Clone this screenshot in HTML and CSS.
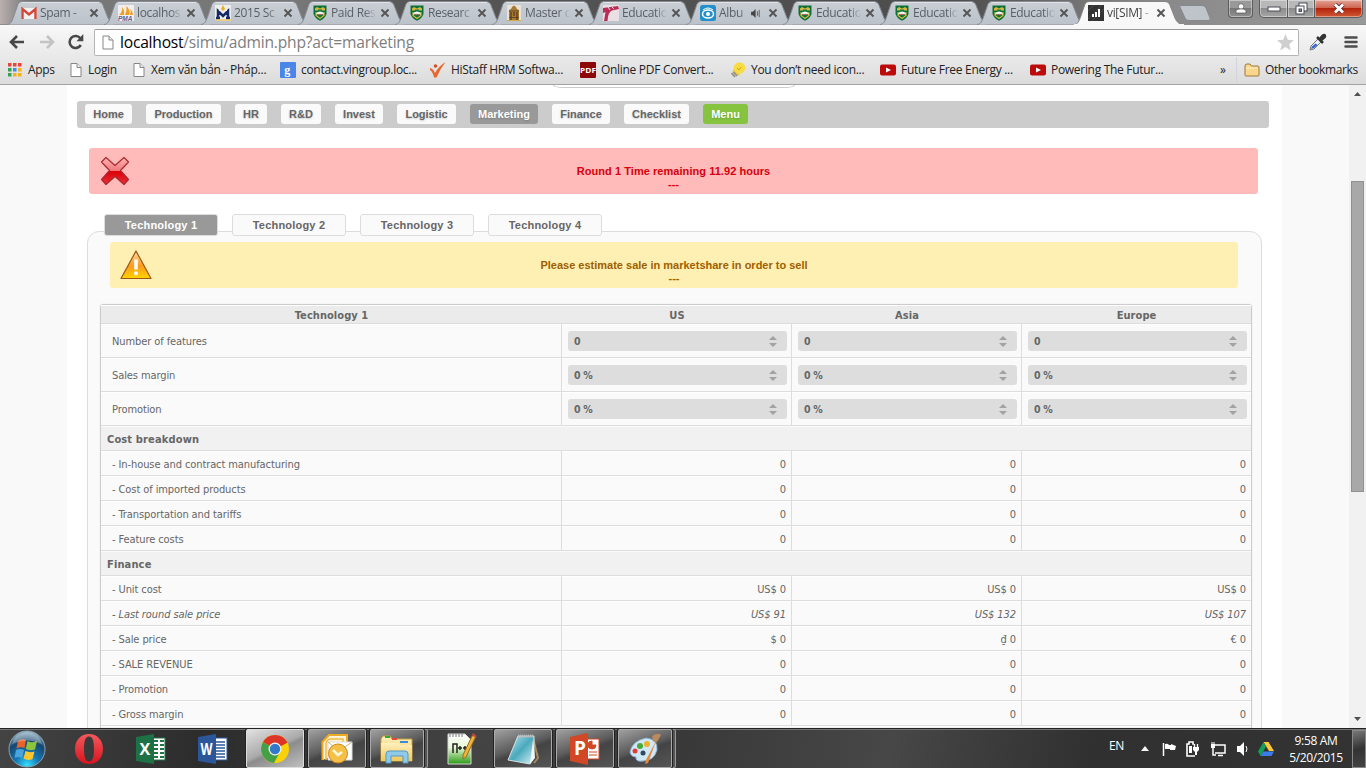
FILE: index.html
```html
<!DOCTYPE html>
<html lang="en">
<head>
<meta charset="utf-8">
<title>vi[SIM] - Marketing</title>
<link rel="stylesheet" href="styles.css">
</head>
<body>
<svg class="defs" width="0" height="0" aria-hidden="true">
  <defs>
    <linearGradient id="tabg" x1="0" y1="0" x2="0" y2="1"><stop offset="0" stop-color="#c9ced5"/><stop offset="1" stop-color="#bcc2ca"/></linearGradient>
    <linearGradient id="redg" x1="0" y1="0" x2="0" y2="1"><stop offset="0" stop-color="#ffb4b4"/><stop offset=".48" stop-color="#f07a7c"/><stop offset=".52" stop-color="#dc0008"/><stop offset="1" stop-color="#e83238"/></linearGradient>
    <linearGradient id="warng" x1="0" y1="0" x2="0" y2="1"><stop offset="0" stop-color="#ffd9a0"/><stop offset=".55" stop-color="#fb9b1c"/><stop offset="1" stop-color="#ffd400"/></linearGradient>
    <radialGradient id="orbg" cx=".5" cy=".95" r=".95"><stop offset="0" stop-color="#37e0ff"/><stop offset=".35" stop-color="#1577b5"/><stop offset=".7" stop-color="#17476f"/><stop offset="1" stop-color="#9cb9c9"/></radialGradient>
    <linearGradient id="operag" x1="0" y1="0" x2="0" y2="1"><stop offset="0" stop-color="#f2595c"/><stop offset="1" stop-color="#d9131f"/></linearGradient>
    <linearGradient id="folderg" x1="0" y1="0" x2="0" y2="1"><stop offset="0" stop-color="#fff0bd"/><stop offset="1" stop-color="#edc95c"/></linearGradient>
    <linearGradient id="padg" x1="0" y1="0" x2="1" y2="1"><stop offset="0" stop-color="#b8e8ef"/><stop offset=".5" stop-color="#4aa9bd"/><stop offset="1" stop-color="#d9f3f6"/></linearGradient>
    <linearGradient id="nppg" x1="0" y1="0" x2="0" y2="1"><stop offset="0" stop-color="#fff"/><stop offset=".45" stop-color="#e7f7d6"/><stop offset="1" stop-color="#2a9a14"/></linearGradient>
    <symbol id="tab" viewBox="0 0 112 25"><path d="M0 24.5C4 24 5 21 6.5 17L11 4Q12 1.500 15 1.500H91Q94 1.500 95.500 4L101 18Q103.500 24 108 24.500" fill="url(#tabg)" stroke="#858a91"/><path d="M14.500 2.500H92" stroke="#dfe3e8"/></symbol>
    <symbol id="tab-on" viewBox="0 0 112 25"><path d="M0 25C4 24 5 21 6.500 17L11 4Q12 1.500 15 1.500H91Q94 1.500 95.500 4L101 18Q103.500 24 109 25" fill="#f8f8f8" stroke="#858585"/><path d="M0 25H110" stroke="#f7f7f7" stroke-width="2"/></symbol>
    <symbol id="x" viewBox="0 0 10 10"><path d="M1.500 1.500L8.500 8.500M8.500 1.500L1.500 8.500" stroke="#555" stroke-width="1.900"/></symbol>
    <symbol id="crest" viewBox="0 0 16 16"><path d="M1.500 .5H14.500V9Q13 13.500 8 15.800Q3 13.500 1.500 9Z" fill="#0b703b"/><path d="M3 3.500L5 2L8 3.500L11 2L13 3.500V5.500H3Z" fill="#d6b83c"/><path d="M6 4.500H10V6H6Z" fill="#177c45"/><path d="M4 8Q8 5 12 8V9.800H4Z" fill="#fff"/><path d="M5 9.500H11" stroke="#9a7552" stroke-width="1.300"/><path d="M4 7V10.500L8 13.500L12 10.500V7" fill="none" stroke="#d9bc3d" stroke-width="1.100"/></symbol>
    <symbol id="page" viewBox="0 0 12 14"><path d="M1 .5H7L11 4.500V13.500H1Z" fill="#fff" stroke="#868686"/><path d="M7 .5V4.500H11" fill="#eee" stroke="#868686"/></symbol>
    <symbol id="yt" viewBox="0 0 16 12"><rect y=".5" width="16" height="11" rx="2" fill="#bd0b0b"/><path d="M6 3.500V8.500L11 6Z" fill="#fff"/></symbol>
  </defs>
</svg>

<header class="chrome">
  <div class="tabs">
    <div class="tab"><svg class="shape"><use href="#tab"/></svg><svg class="fav" viewBox="0 0 16 16"><rect y="3" width="16" height="11" fill="#f1f1f1"/><path d="M1.500 14V4L8 9.500L14.500 4V14" fill="none" stroke="#d44638" stroke-width="2.400"/></svg><span class="name">Spam - </span><svg class="x"><use href="#x"/></svg></div>
    <div class="tab"><svg class="shape"><use href="#tab"/></svg><svg class="fav" viewBox="0 0 16 16"><rect width="16" height="16" fill="#eee"/><path d="M1 10Q4 8 4.500 2Q7 6 6 10ZM7 10Q9 6 8.500 1Q13 6 11 10ZM12 10Q13 7 12.500 4Q15 7 15 10Z" fill="#f59b1e"/><text x="0" y="16" class="pma">PMA</text></svg><span class="name">localhos</span><svg class="x"><use href="#x"/></svg></div>
    <div class="tab"><svg class="shape"><use href="#tab"/></svg><svg class="fav" viewBox="0 0 16 16"><rect width="16" height="16" fill="#eee"/><path d="M3 13V6L8 11L13 6V13M1 13H5M11 13H15M2 6H4M12 6H14" fill="none" stroke="#152a66" stroke-width="2.500"/><path d="M8 0L10 4L8 6L6 4Z" fill="#e8b020"/><path d="M0 15H16" stroke="#e8b020"/></svg><span class="name">2015 Sc</span><svg class="x"><use href="#x"/></svg></div>
    <div class="tab"><svg class="shape"><use href="#tab"/></svg><svg class="fav"><use href="#crest"/></svg><span class="name">Paid Res</span><svg class="x"><use href="#x"/></svg></div>
    <div class="tab"><svg class="shape"><use href="#tab"/></svg><svg class="fav"><use href="#crest"/></svg><span class="name">Researc</span><svg class="x"><use href="#x"/></svg></div>
    <div class="tab"><svg class="shape"><use href="#tab"/></svg><svg class="fav" viewBox="0 0 16 16"><rect x="1" width="14" height="16" fill="#e8e3d6"/><path d="M3 15V5L5 4Q6 1 8 .5Q10 1 11 4L13 5V15Z" fill="#a57a35"/><path d="M3 6H13M3 12.500H13" stroke="#6e4820"/><path d="M5 7V15M8 7V11M11 7V15" stroke="#5c3b17" stroke-width="1.300"/><path d="M1 15.500H15" stroke="#d2a74f"/></svg><span class="name">Master o</span><svg class="x"><use href="#x"/></svg></div>
    <div class="tab"><svg class="shape"><use href="#tab"/></svg><svg class="fav" viewBox="0 0 16 16"><rect width="16" height="16" fill="#eadfe2"/><path d="M0 3L15 1L16 4L9 5.500Q5 7 4.500 16H1L2.500 7L0 8Z" fill="#b82c56"/><path d="M5 2L7 5M9 2L11 4" stroke="#fff" stroke-width=".8"/></svg><span class="name">Educatio</span><svg class="x"><use href="#x"/></svg></div>
    <div class="tab"><svg class="shape"><use href="#tab"/></svg><svg class="fav" viewBox="0 0 16 16"><rect width="16" height="16" rx="2.500" fill="#238fcb"/><ellipse cx="8" cy="9" rx="5.500" ry="4" fill="none" stroke="#fff" stroke-width="1.500"/><circle cx="8" cy="9" r="2" fill="#fff"/><path d="M3 5Q8 1 13 5" stroke="#fff" fill="none"/></svg><span class="name short">Albu</span><svg class="speaker" viewBox="0 0 12 10"><path d="M0 3H2L5 0V10L2 7H0Z" fill="#444"/><path d="M7 2.500V7.500M9 1V9" stroke="#555"/></svg><svg class="x"><use href="#x"/></svg></div>
    <div class="tab"><svg class="shape"><use href="#tab"/></svg><svg class="fav"><use href="#crest"/></svg><span class="name">Educatio</span><svg class="x"><use href="#x"/></svg></div>
    <div class="tab"><svg class="shape"><use href="#tab"/></svg><svg class="fav"><use href="#crest"/></svg><span class="name">Educatio</span><svg class="x"><use href="#x"/></svg></div>
    <div class="tab"><svg class="shape"><use href="#tab"/></svg><svg class="fav"><use href="#crest"/></svg><span class="name">Educatio</span><svg class="x"><use href="#x"/></svg></div>
    <div class="tab on"><svg class="shape"><use href="#tab-on"/></svg><svg class="fav" viewBox="0 0 16 16"><rect width="16" height="16" fill="#333"/><path d="M0 6L6 0M0 14L14 0M4 16L16 4" stroke="#484848"/><path d="M5 12V9M8 12V7M11 12V4" stroke="#fff" stroke-width="2"/></svg><span class="name">vi[SIM] -</span><svg class="x"><use href="#x"/></svg></div>
    <svg class="newtab" viewBox="0 0 34 18"><path d="M2 1.500H24Q27 1.500 28 4L32 14Q33 16.500 30 16.500H11Q8 16.500 7 14L2 3Q1 1.500 2 1.500Z" fill="#bfc4cb" stroke="#858a90"/></svg>
    <div class="winbtns">
      <span class="wb user"><svg width="12" height="11" viewBox="0 0 12 11"><circle cx="6" cy="3.500" r="2.800" fill="#fff" stroke="#555" stroke-width=".7"/><path d="M1 10V8Q1 6.500 4 6H8Q11 6.500 11 8V10Z" fill="#fff" stroke="#555" stroke-width=".7"/></svg></span>
      <span class="wb min"><svg width="14" height="6"><rect x="1" y="1" width="12" height="4" fill="#fff" stroke="#4b4b59"/></svg></span>
      <span class="wb max"><svg width="13" height="13" viewBox="0 0 13 13"><rect x="4" y="1" width="8" height="8" fill="#fff" stroke="#4b4b59"/><rect x="1" y="4" width="8" height="8" fill="#fff" stroke="#4b4b59"/><rect x="4" y="7" width="2.500" height="2.500" fill="#888" stroke="#4b4b59"/></svg></span>
      <span class="wb close"><svg width="14" height="11" viewBox="0 0 14 11"><path d="M3 1.500L11 9.500M11 1.500L3 9.500" stroke="#5b3038" stroke-width="4.500"/><path d="M3 1.500L11 9.500M11 1.500L3 9.500" stroke="#fff" stroke-width="2.800"/></svg></span>
    </div>
  </div>
  <div class="toolbar">
    <svg class="tb back" viewBox="0 0 16 14"><path d="M8 1L2 7L8 13M2 7H15" fill="none" stroke="#484848" stroke-width="2.600"/></svg>
    <svg class="tb fwd" viewBox="0 0 16 14"><path d="M8 1L14 7L8 13M14 7H1" fill="none" stroke="#c3c3c3" stroke-width="2.600"/></svg>
    <svg class="tb reload" viewBox="0 0 16 16"><path d="M12.800 11A6 6 0 1 1 12.500 4.500" fill="none" stroke="#484848" stroke-width="2.600"/><path d="M15.300 0V7.300H8.500Z" fill="#484848"/></svg>
    <div class="omni"><svg width="12" height="15"><use href="#page"/></svg><span class="url"><b>localhost</b>/simu/admin.php?act=marketing</span><svg class="star" width="17" height="17" viewBox="0 0 17 17"><path d="M8.500 0L10.800 5.800L17 6.200L12.200 10.200L13.800 16.500L8.500 13L3.200 16.500L4.800 10.200L0 6.200L6.200 5.800Z" fill="#cfcfcf"/></svg></div>
    <svg class="picker" viewBox="0 0 18 18"><path d="M1 17L2 13L9 6L12 9L5 16Z" fill="#e9f1fb" stroke="#777"/><path d="M2 16L3 13.500L6.500 10.500L8.500 12L5 15Z" fill="#3466cf"/><path d="M8 4L14 10" stroke="#333" stroke-width="2.500"/><path d="M10 5L13 1.500Q16 0 17 2Q18 4 16 5.500L13 8Z" fill="#333"/></svg>
    <svg class="menu" viewBox="0 0 14 14"><path d="M1.500 2.500H12.500M1.500 7H12.500M1.500 11.500H12.500" stroke="#4d4d4d" stroke-width="2.500" stroke-linecap="round"/></svg>
  </div>
  <div class="marks">
    <span class="mark apps"><svg width="14" height="14" viewBox="0 0 14 14"><path d="M0 0h3.500v3.500H0zM5 0h3.500v3.500H5zM10 0h3.500v3.500H10z" fill="#e8453c"/><path d="M0 5h3.500v3.500H0zM0 10h3.500v3.500H0z" fill="#32a350"/><path d="M5 5h3.500v3.500H5z" fill="#4688f1"/><path d="M10 5h3.500v3.500H10zM5 10h3.500v3.500H5zM10 10h3.500v3.500H10z" fill="#f5b01c"/></svg>Apps</span>
    <span class="mark login"><svg width="12" height="14"><use href="#page"/></svg>Login</span>
    <span class="mark xem"><svg width="12" height="14"><use href="#page"/></svg>Xem văn bản - Pháp...</span>
    <span class="mark"><svg width="16" height="16" viewBox="0 0 16 16"><rect width="16" height="16" rx="1" fill="#4a86e8"/><text x="4.200" y="11.500" class="gfav">g</text></svg>contact.vingroup.loc...</span>
    <span class="mark hi"><svg width="16" height="16" viewBox="0 0 16 16"><path d="M0 6Q3 6.500 5 11Q9 4 15.500 0Q10 7 6.500 15.500H4Q3 10 0 8Z" fill="#e9652b"/><circle cx="5.500" cy="4" r="1.800" fill="#d94f25"/></svg>HiStaff HRM Softwa...</span>
    <span class="mark pdf"><svg width="16" height="16" viewBox="0 0 16 16"><rect width="16" height="16" rx="1" fill="#8d0909"/><text x="0" y="11" textLength="16" lengthAdjust="spacingAndGlyphs" class="pdftxt">PDF</text></svg>Online PDF Convert...</span>
    <span class="mark bulb"><svg width="16" height="16" viewBox="0 0 16 16"><path d="M3 6L9 13L5 14L1.500 10.500Z" fill="#e9c837"/><circle cx="8.500" cy="6" r="5.800" fill="#f7dc45"/><path d="M0.500 11L4 15M2.500 10L6 14" stroke="#8d8d8d" stroke-width="1.600"/><path d="M6 6L8 8L10 5" stroke="#d6a711" fill="none"/></svg>You don’t need icon...</span>
    <span class="mark fut"><svg width="16" height="12"><use href="#yt"/></svg>Future Free Energy ...</span>
    <span class="mark pow"><svg width="16" height="12"><use href="#yt"/></svg>Powering The Futur...</span>
    <span class="more">»</span>
    <span class="mark other"><svg width="16" height="14" viewBox="0 0 16 14"><path d="M1 3Q1 1 3 1H6L7.500 3H14Q15 3 15 5V12Q15 13 14 13H2Q1 13 1 12Z" fill="#f9d68b" stroke="#9f793d"/><path d="M2 5H14" stroke="#fff1c9"/></svg>Other bookmarks</span>
  </div>
</header>

<div class="view">
  <main class="sheet">
    <div class="peek"></div>
    <nav class="nav">
      <a>Home</a><a>Production</a><a>HR</a><a>R&amp;D</a><a>Invest</a><a>Logistic</a><a class="cur">Marketing</a><a>Finance</a><a>Checklist</a><a class="go">Menu</a>
    </nav>
    <section class="note error">
      <svg width="30" height="30" viewBox="0 0 30 30"><path d="M6 1.500L15 9.500L24 1.500L28.500 6L20.500 14.500L28.500 23.500L24 28.500L15 20.500L6 28.500L1.500 23.500L9.500 14.500L1.500 6Z" fill="url(#redg)" stroke="#a82a30" stroke-linejoin="round" stroke-width="1.200"/></svg>
      <p>Round 1 Time remaining 11.92 hours<br>---</p>
    </section>
    <div class="techs"><a class="cur">Technology 1</a><a>Technology 2</a><a>Technology 3</a><a>Technology 4</a></div>
    <section class="panel">
      <div class="note warn">
        <svg width="32" height="30" viewBox="0 0 32 30"><path d="M16 1L31 28.500H1Z" fill="url(#warng)" stroke="#9f5517" stroke-linejoin="round" stroke-width="1.200"/><path d="M14.200 9.500H17.800V19.500H14.200Z" fill="#fff"/><circle cx="16" cy="23.300" r="2" fill="#fff"/></svg>
        <p>Please estimate sale in marketshare in order to sell<br>---</p>
      </div>
      <div class="table">
        <div class="row head"><span>Technology 1</span><span>US</span><span>Asia</span><span>Europe</span></div>
        <div class="row tall"><span>Number of features</span><span><i class="spin">0</i></span><span><i class="spin">0</i></span><span><i class="spin">0</i></span></div>
        <div class="row tall"><span>Sales margin</span><span><i class="spin">0 %</i></span><span><i class="spin">0 %</i></span><span><i class="spin">0 %</i></span></div>
        <div class="row tall"><span>Promotion</span><span><i class="spin">0 %</i></span><span><i class="spin">0 %</i></span><span><i class="spin">0 %</i></span></div>
        <div class="group">Cost breakdown</div>
        <div class="row"><span>- In-house and contract manufacturing</span><span>0</span><span>0</span><span>0</span></div>
        <div class="row"><span>- Cost of imported products</span><span>0</span><span>0</span><span>0</span></div>
        <div class="row"><span>- Transportation and tariffs</span><span>0</span><span>0</span><span>0</span></div>
        <div class="row"><span>- Feature costs</span><span>0</span><span>0</span><span>0</span></div>
        <div class="group">Finance</div>
        <div class="row"><span>- Unit cost</span><span>US$ 0</span><span>US$ 0</span><span>US$ 0</span></div>
        <div class="row last"><span>- Last round sale price</span><span>US$ 91</span><span>US$ 132</span><span>US$ 107</span></div>
        <div class="row"><span>- Sale price</span><span>$ 0</span><span>₫ 0</span><span>€ 0</span></div>
        <div class="row"><span>- SALE REVENUE</span><span>0</span><span>0</span><span>0</span></div>
        <div class="row"><span>- Promotion</span><span>0</span><span>0</span><span>0</span></div>
        <div class="row"><span>- Gross margin</span><span>0</span><span>0</span><span>0</span></div>
        <div class="group"></div>
      </div>
    </section>
  </main>
  <div class="scroll">
    <svg width="7" height="4"><path d="M3.500 0L7 4H0Z" fill="#505050"/></svg>
    <div class="thumb"></div>
    <svg width="7" height="4"><path d="M0 0H7L3.500 4Z" fill="#505050"/></svg>
  </div>
</div>

<footer class="taskbar">
  <span class="start"><svg width="38" height="38" viewBox="0 0 38 38"><circle cx="19" cy="19" r="18" fill="url(#orbg)" stroke="#8aa3b3"/><path d="M10 11Q14 8 18 10L16.500 18Q13 16.500 8.500 18.500Z" fill="#e8642c"/><path d="M19.500 11Q24 13.500 29 11L27 19.500Q22 21 17.800 19Z" fill="#8cc43c"/><path d="M8 20Q12 18 16 20L14 28Q10 26 6.500 28Z" fill="#4ba5dc"/><path d="M17.500 21Q22 23 26.500 21.500L24.500 29Q20 31 15.500 28.500Z" fill="#fbc62e"/><path d="M4 14Q7 3 19 2Q31 3 34 14Q19 7 4 14Z" fill="#fff" opacity=".27"/></svg></span>
  <span class="app"><svg width="30" height="32" viewBox="0 0 30 32"><path fill-rule="evenodd" d="M15 1C23 1 29 7 29 16S23 31 15 31S1 25 1 16S7 1 15 1ZM15 3.500C11.500 3.500 10 8 10 16S11.500 28.500 15 28.500S20 24 20 16S18.500 3.500 15 3.500Z" fill="url(#operag)"/></svg></span>
  <span class="app"><svg width="30" height="30" viewBox="0 0 30 30"><rect x="16" y="4" width="13" height="22" fill="#fff" stroke="#217346"/><path d="M18 7h4M24 7h4M18 11h4M24 11h4M18 15h4M24 15h4M18 19h4M24 19h4M18 23h4M24 23h4" stroke="#217346" stroke-width="2"/><path d="M0 3L18 0V30L0 27Z" fill="#1e7145"/><text x="3.500" y="20.500" class="office">X</text></svg></span>
  <span class="app"><svg width="30" height="30" viewBox="0 0 30 30"><rect x="16" y="4" width="13" height="22" fill="#fff" stroke="#2b579a"/><path d="M18 8h9M18 11h9M18 14h9M18 17h9M18 20h9M18 23h9" stroke="#2b579a" stroke-width="1.300"/><path d="M0 3L18 0V30L0 27Z" fill="#2b579a"/><text x="2.500" y="20.500" textLength="12" lengthAdjust="spacingAndGlyphs" class="office">W</text></svg></span>
  <span class="app run active"><svg width="30" height="30" viewBox="0 0 30 30"><circle cx="15" cy="15" r="14" fill="#fbd20a"/><path d="M15 15L2.900 8A14 14 0 0 1 27.500 8.500Z" fill="#dd3428"/><path d="M2.900 8A14 14 0 0 0 14 29L20 18L15 15Z" fill="#44a047"/><path d="M15 8.500H27.500L19 13Z" fill="#dd3428"/><circle cx="15" cy="15" r="6.500" fill="#f3f3ed"/><circle cx="15" cy="15" r="5.200" fill="#3478c9"/></svg></span>
  <span class="app run"><svg width="32" height="30" viewBox="0 0 32 30"><path d="M1.500 26V8L8 1H26V17" fill="#fff4d3" stroke="#eeaa25" stroke-width="2"/><path d="M5 26V9Q6 5 10 5H22V10" fill="none" stroke="#f1b94a" stroke-width="1.500"/><path d="M7 8H31V26H7Z" fill="#fff" stroke="#ddd"/><path d="M7 8L18 17L31 8" fill="none" stroke="#d1b371"/><circle cx="17" cy="19.500" r="9.500" fill="#f4c048" stroke="#cc861f"/><path d="M12 16L17 21L21 18" fill="none" stroke="#fff8d8" stroke-width="2.500"/></svg></span>
  <span class="app run stack"><svg width="34" height="30" viewBox="0 0 34 30"><path d="M1 5L3 2H10L12 5H32V27H1Z" fill="url(#folderg)" stroke="#c59b3f"/><path d="M5 3h5" stroke="#35a834" stroke-width="2"/><path d="M12 5h5" stroke="#e44b34" stroke-width="2"/><path d="M20 8h8" stroke="#3a8cd7" stroke-width="2"/><path d="M1 9H18L20 11H32V27H1Z" fill="url(#folderg)"/><path d="M6 29V20Q6 17 9 17H25Q28 17 28 20V29H23V22H11V29Z" fill="#8fcbe9" stroke="#5599c4"/></svg></span>
  <span class="app"><svg width="32" height="34" viewBox="0 0 32 34"><path d="M3 2H20L26 8V32H3Z" fill="url(#nppg)" stroke="#d5d5d5"/><path d="M5 2V5M8 2V5M11 2V5M14 2V5M17 2V5" stroke="#777"/><path d="M8 21V12H12V21M13 16h4M15 14v4M18 16h4M20 14v4" fill="none" stroke="#222" stroke-width="1.500"/><path d="M28 2L31 4L21 25L18 27L18 23Z" fill="#efb635" stroke="#9d6720"/><path d="M28 1L31 3L30 5L27 4Z" fill="#b94444"/></svg></span>
  <span class="app run"><svg width="32" height="32" viewBox="0 0 32 32"><path d="M26 5L31 25L27 30" fill="none" stroke="#a98a5d" stroke-width="2"/><path d="M11 3H27V24L23 31L1 27Z" fill="url(#padg)" stroke="#d6e4e6"/><path d="M26 7L23 31L28 25Z" fill="#f1f6f6"/><path d="M11 3H27" stroke="#b2babd" stroke-width="3" stroke-dasharray="1 1"/></svg></span>
  <span class="app run"><svg width="30" height="32" viewBox="0 0 30 32"><rect x="17" y="6" width="12" height="20" fill="#fff" stroke="#d24726"/><path d="M22 8A4 4 0 1 0 26 12H22ZM19 19H27M19 22H27" fill="#d24726" stroke="#d24726"/><path d="M0 4L18 0V32L0 28Z" fill="#d24726"/><text x="4" y="22" class="office p">P</text></svg></span>
  <span class="app run stack"><svg width="34" height="32" viewBox="0 0 34 32"><path d="M2 19Q4 8 18 5Q30 6 29 17Q26 28 15 28Q7 29 8 24Q3 24 2 19Z" fill="#cfe7f6" stroke="#8bb0cc"/><circle cx="7" cy="18" r="2.500" fill="#e23d31"/><circle cx="12" cy="13" r="3" fill="#4aaa36"/><circle cx="19" cy="11" r="3" fill="#efb02c"/><circle cx="15" cy="20" r="2.500" fill="#30495f"/><path d="M28 8L20 30L17 31L18 27Z" fill="#e38a38"/><path d="M24 3Q30 -1 33 2Q31 6 28 10L25 8Z" fill="#b98a5e"/></svg></span>
  <div class="tray">
    <span class="lang">EN</span>
    <svg class="up" width="8" height="5"><path d="M4 0L8 5H0Z" fill="#f5f5f5"/></svg>
    <svg class="flag" width="16" height="16" viewBox="0 0 16 16"><path d="M2.500 2V15" stroke="#fff" stroke-width="1.500"/><path d="M4 3Q7 2 8 4H10V3L15 5L14 9H9V8H4Z" fill="#fff"/></svg>
    <svg class="bat" width="16" height="16" viewBox="0 0 16 16"><path d="M10 15H2V3H4V1H8V3H9" fill="none" stroke="#fff" stroke-width="1.600"/><path d="M4 5H7V12H4Z" fill="#fff"/><path d="M8 6H14V9L12 11V14H10V11L8 9Z" fill="#fff"/><path d="M9.500 3V6M12.500 3V6" stroke="#fff" stroke-width="1.300"/></svg>
    <svg class="net" width="16" height="16" viewBox="0 0 16 16"><path d="M5 4H15V12H5M3 7V14H6M8 14.500H13" fill="none" stroke="#fff" stroke-width="1.500"/><path d="M1 3H5V7H1Z" fill="#fff"/><path d="M2 1V4M4 1V4" stroke="#fff"/></svg>
    <svg class="vol" width="14" height="16" viewBox="0 0 14 16"><path d="M1 5H4L8 1V15L4 11H1Z" fill="#fff"/><path d="M10 5Q12 8 10 11" stroke="#fff" fill="none"/></svg>
    <svg class="drive" width="16" height="14" viewBox="0 0 16 14"><path d="M5.500 0H10.500L16 9H11Z" fill="#fdc935"/><path d="M5.500 0L8 4.500L2.700 14L0 9.500Z" fill="#149f5c"/><path d="M5.300 9.500H16L13.400 14H2.700Z" fill="#3a7de8"/></svg>
    <span class="clock">9:58 AM<br>5/20/2015</span>
    <span class="peekdesk"></span>
  </div>
</footer>
</body>
</html>
```
FILE: styles.css
```css
* { box-sizing: border-box; }
body {
  margin: 0;
  width: 1366px;
  height: 768px;
  overflow: hidden;
  display: flex;
  flex-direction: column;
  font: 11px/14px "DejaVu Sans Condensed", "Noto Sans", sans-serif;
  color: #666;
  background: #f9f9f9;
}
.defs { position: absolute; }
svg { display: block; flex: none; }
p { margin: 0; }

/* Browser chrome */
.chrome {
  height: 85px;
  flex: none;
  border-bottom: 1px solid #a3a3a3;
  background: linear-gradient(#f8f8f8 25px, #dcdcdc 84px);
  font: 12px/16px "Open Sans", "Noto Sans", sans-serif;
  color: #222;
}
.tabs {
  height: 25px;
  display: flex;
  padding-left: 7px;
  background: linear-gradient(90deg, #b9b0ae, #777 2%, #777 22%, #555 30%, #4d4d4d 70%, #888 84%, #999);
  box-shadow: inset 0 -1px #8d8d8d;
}
.tab {
  position: relative;
  width: 97px;
  flex: none;
  height: 25px;
  display: flex;
  align-items: center;
  padding: 1px 0 0 14px;
  color: #5a5f66;
}
.shape { position: absolute; left: 0; top: 0; width: 112px; height: 25px; }
.tab > :not(.shape) { position: relative; }
.on { z-index: 2; color: #444; }
.fav { width: 16px; height: 16px; }
.name {
  width: 48px;
  margin: 0 1px 0 3px;
  white-space: nowrap;
  letter-spacing: -.35px;
  -webkit-mask-image: linear-gradient(90deg, #000 70%, #0000 94%);
  mask-image: linear-gradient(90deg, #000 70%, #0000 94%);
}
.name.short { width: 30px; margin-right: 2px; }
.speaker { width: 11px; height: 9px; margin-right: 6px; }
.x { width: 10px; height: 10px; }
.newtab { width: 34px; height: 18px; margin: 4px 0 0 6px; }
.tab.on { width: 98px; }
.winbtns { display: flex; margin-left: auto; height: 18px; padding-right: 3px; }
.wb {
  height: 18px;
  display: flex;
  justify-content: center;
  align-items: center;
  border: 1px solid #5c5c5c;
  border-top: 0;
  box-shadow: inset 0 0 0 1px #ffffff66;
  background: linear-gradient(#b8b8b8 45%, #8c8c8c 50%, #a6a6a6);
}
.user { width: 25px; margin-right: 6px; border-radius: 0 0 4px 4px; background: linear-gradient(#999 45%, #777 50%, #909090); }
.min { width: 29px; border-radius: 0 0 0 5px; }
.max { width: 27px; border-left: 0; }
.close { width: 48px; border-left: 0; border-radius: 0 0 5px 0; background: linear-gradient(#e2a597, #cf6652 45%, #b4230c 50%, #cf5a34); }
.pma { font: italic bold 6.500px "Liberation Sans", sans-serif; fill: #5a5f9c; }
.toolbar { height: 32px; display: flex; align-items: center; padding: 2px 8px 0 9px; }
.tb { width: 16px; height: 14px; }
.fwd { margin-left: 14px; }
.reload { width: 16px; height: 16px; margin-left: 13px; }
.omni {
  height: 27px;
  width: 1205px;
  margin-left: 10px;
  display: flex;
  align-items: center;
  padding: 0 4px 0 7px;
  border: 1px solid #b4b4b4;
  border-top-color: #999;
  border-radius: 2px;
  background: #fff;
}
.url { margin-left: 6px; font-size: 15.600px; line-height: 20px; color: #7e7e7e; letter-spacing: -.22px; white-space: nowrap; }
.url b { font-weight: 400; color: #000; }
.star { margin-left: auto; }
.picker { width: 18px; height: 18px; margin-left: 10px; }
.menu { width: 14px; height: 14px; margin-left: auto; }
.marks {
  height: 27px;
  display: grid;
  grid-template-columns: 62px 63px 147px 150px 150px 151px 149px 150px 190px 16px auto;
  padding: 0 0 1px 8px;
  align-items: center;
  white-space: nowrap;
  letter-spacing: -.3px;
}
.mark { display: flex; align-items: center; gap: 5px; }
.apps, .login, .xem { gap: 6px; }
.bulb { gap: 4px; }
.xem { letter-spacing: -.25px; }
.other { height: 26px; padding-left: 7px; border-left: 1px solid #cfd5da; letter-spacing: -.38px; }
.gfav { font: bold 12px "Liberation Serif", serif; fill: #fff; }
.pdftxt { font: bold 7px "Open Sans", sans-serif; fill: #fff; letter-spacing: 0; }

/* Web page */
.view { flex: 1; min-height: 0; display: flex; overflow: hidden; }
.sheet { width: 1215px; flex: none; margin-left: 67px; padding: 0 10px; background: #fff; }
.peek { width: 242px; height: 3px; margin-left: 476px; border: 1px solid #ccc; border-top: 0; border-radius: 0 0 10px 10px / 0 0 3px 3px; }
.nav {
  width: 1192px;
  height: 27px;
  margin-top: 13px;
  display: grid;
  grid-template-columns: 47px 75px 32px 40px 48px 59px 68px 58px 65px 45px;
  gap: 14px;
  padding: 3px 8px 4px;
  border-radius: 3px;
  background: #ccc;
}
.nav a, .techs a {
  font: bold 11px/20px "Liberation Sans", Arial, sans-serif;
  text-align: center;
  color: #666;
  background: #fafafa;
  border-radius: 3px;
  text-shadow: 0 1px 2px #0003;
}
.nav .cur, .techs .cur { background: #999; color: #fff; }
.nav .go { background: #86c440; color: #fff; }
.note {
  height: 46px;
  display: flex;
  border-radius: 3px;
  position: relative;
  font: bold 11px/13px "Liberation Sans", Arial, sans-serif;
}
.note p { flex: 1; text-align: center; padding-top: 17px; }
.note svg { position: absolute; left: 11px; top: 8px; }
.error { width: 1169px; margin: 20px 0 0 12px; background: #ffbaba; color: #d8000c; letter-spacing: .05px; }
.techs { position: relative; z-index: 1; display: flex; gap: 14px; height: 22px; margin: 20px 0 -5px 27px; }
.techs a { width: 114px; height: 22px; border: 1px solid #ddd; text-shadow: none; letter-spacing: .2px; }
.panel {
  width: 1175px;
  height: 520px;
  margin-left: 10px;
  padding: 10px 9px 0 12px;
  border: 1px solid #ddd;
  border-radius: 12px;
  background: #fafafa;
}
.warn { width: 1128px; margin-left: 10px; background: #feefb3; color: #9f6000; }
.warn svg { left: 10px; }
.table {
  width: 1152px;
  margin-top: 16px;
  border: 1px solid #ccc;
  border-radius: 3px 3px 0 0;
  box-shadow: 0 0 1px #ccc;
  letter-spacing: -.09px;
}
.row { display: grid; grid-template-columns: 461px 230px 230px 229px; height: 25px; border-bottom: 1px solid #ddd; box-shadow: inset 0 1px #fff; }
.row > span { line-height: 28px; height: 24px; text-align: right; padding-right: 5px; border-right: 1px solid #ddd; }
.row > span:first-child { text-align: left; padding-left: 11px; }
.row > span:last-child { border-right: 0; padding-right: 5px; }
.row.head { height: 19px; background: #ebebeb; font-weight: bold; letter-spacing: .05px; }
.row.head > span, .row.head > span:first-child { height: 18px; text-align: center; line-height: 21px; border: 0; padding: 0; }
.row.tall { height: 34px; }
.row.tall > span { height: 33px; padding: 7px 4px 6px 6px; text-align: left; }
.row.tall > span:first-child { line-height: 36px; padding: 0 0 0 11px; }
.row.last { font-style: italic; }
.spin {
  display: block;
  position: relative;
  height: 20px;
  padding-left: 6px;
  border-radius: 3px;
  background: #ddd;
  font: bold 10.500px/21px "DejaVu Sans Condensed", sans-serif;
  letter-spacing: -.35px;
}
.spin::before, .spin::after {
  content: "";
  position: absolute;
  right: 10.500px;
  border: 4px solid transparent;
}
.spin::before { top: 1px; border-bottom-color: #a2a2a2; }
.spin::after { top: 12px; border-top-color: #a2a2a2; }
.group { height: 25px; border-bottom: 1px solid #ddd; padding-left: 6px; background: #f1f1f1; box-shadow: inset 0 1px #fafafa; font-weight: bold; line-height: 27px; letter-spacing: .14px; }
.scroll { width: 17px; margin-left: auto; padding: 7px 0; background: #f1f1f1; display: flex; flex-direction: column; align-items: center; }
.thumb { width: 13px; height: 311px; margin: 85px 0 auto; background: #a8a8a8; border: 1px solid #909090; }

/* Taskbar */
.taskbar {
  height: 40px;
  flex: none;
  display: flex;
  gap: 4px;
  border-top: 1px solid #222;
  background: linear-gradient(100deg, #444, #2c2c2c 15%, #444 35%, #393939 50%, #474747 65%, #303030 80%, #333);
  box-shadow: inset 0 1px #777;
}
.start { width: 56px; padding: 1px 0 0 8px; }
.app { width: 58px; height: 39px; display: flex; align-items: center; justify-content: center; }
.run { border: 1px solid #aaa; border-radius: 2px; background: linear-gradient(160deg, #a0a0a0, #5c5c5c 45%, #444 55%, #555); box-shadow: 0 0 0 1px #222; }
.active { border-color: #ddd; background: linear-gradient(155deg, #e1e1e1, #aaa 48%, #8c8c8c 55%, #c0c0c0); }
.stack { width: 54px; margin-right: 4px; box-shadow: 0 0 0 1px #222, 4px 0 0 -1px #555, 4px 0 0 0 #999; }
.office { font: bold 16px "Open Sans", sans-serif; fill: #fff; }
.p { font-size: 19px; }
.tray { display: flex; align-items: center; margin-left: auto; height: 39px; color: #fff; font: 12px/17px "Open Sans", "Noto Sans", sans-serif; letter-spacing: -.35px; }
.lang { margin: -6px 17px 0 0; }
.flag { margin-left: 12px; }
.bat { margin-left: 8px; }
.net { margin-left: 9px; }
.vol { margin-left: 10px; }
.drive { margin-left: 8px; }
.clock { width: 60px; margin: 1px 6px 0 12px; text-align: center; }
.peekdesk { width: 14px; height: 38px; border: 1px solid #888; background: linear-gradient(165deg, #777, #333 50%, #444); }
```
